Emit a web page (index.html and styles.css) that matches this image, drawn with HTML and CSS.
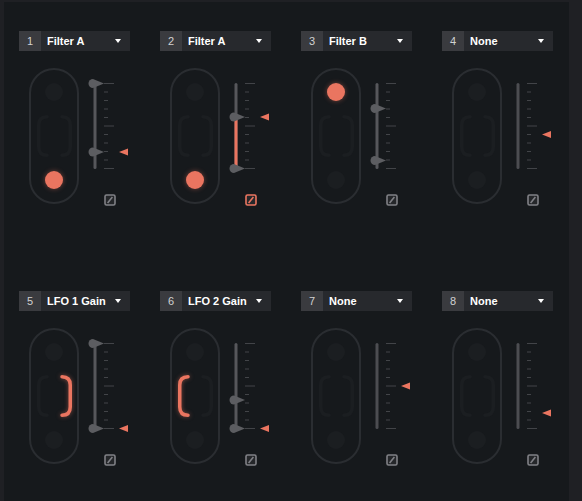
FILE: index.html
```html
<!DOCTYPE html>
<html>
<head>
<meta charset="utf-8">
<link rel="stylesheet" href="styles.css">
</head>
<body>
<svg class="defs" aria-hidden="true">
  <defs>
    <g id="ticks">
      <rect x="19" y="7" width="10" height="1" />
      <rect x="19" y="15.5" width="4" height="1" />
      <rect x="19" y="24" width="4" height="1" />
      <rect x="19" y="32.5" width="4" height="1" />
      <rect x="19" y="41" width="4" height="1" />
      <rect x="19" y="49.5" width="10" height="1" />
      <rect x="19" y="58" width="4" height="1" />
      <rect x="19" y="66.5" width="4" height="1" />
      <rect x="19" y="75" width="4" height="1" />
      <rect x="19" y="83.5" width="4" height="1" />
      <rect x="19" y="92" width="10" height="1" />
    </g>
    <path id="handle" d="M8,-4.5 A4.5,4.5 0 1 0 8,4.5 L19,0 Z" />
    <path id="marker" d="M34,0 L43,-3.5 L43,3.5 Z" />
    <g id="btnicon">
      <rect x="1" y="1" width="10" height="10" rx="1.5" />
      <line x1="3.6" y1="9" x2="8.4" y2="3" />
    </g>
  </defs>
</svg>

<div class="panel">
  <div class="grid">

    <!-- 1 -->
    <div class="module">
      <div class="header"><span class="num">1</span><span class="select"><span>Filter A</span><i class="caret"></i></span></div>
      <div class="body">
        <div class="pill">
          <span class="dot"></span>
          <svg class="bracket" viewBox="0 0 35 42"><path class="br" d="M10 1.75 Q1.75 1.75 1.75 10 L1.75 32 Q1.75 40.25 10 40.25"/><path class="br" d="M25 1.75 Q33.25 1.75 33.25 10 L33.25 32 Q33.25 40.25 25 40.25"/></svg>
          <span class="dot on"></span>
        </div>
        <div class="side">
          <svg class="slider" viewBox="0 0 45 100">
            <rect class="track" x="8.5" y="7" width="3" height="86" rx="1.5"/>
            <use class="tick" href="#ticks"/>
            <use class="knob" href="#handle" y="7.5"/>
            <use class="knob" href="#handle" y="76"/>
            <use class="mark" href="#marker" y="76"/>
          </svg>
          <svg class="btn" viewBox="0 0 12 12"><use href="#btnicon"/></svg>
        </div>
      </div>
    </div>

    <!-- 2 -->
    <div class="module">
      <div class="header"><span class="num">2</span><span class="select"><span>Filter A</span><i class="caret"></i></span></div>
      <div class="body">
        <div class="pill">
          <span class="dot"></span>
          <svg class="bracket" viewBox="0 0 35 42"><path class="br" d="M10 1.75 Q1.75 1.75 1.75 10 L1.75 32 Q1.75 40.25 10 40.25"/><path class="br" d="M25 1.75 Q33.25 1.75 33.25 10 L33.25 32 Q33.25 40.25 25 40.25"/></svg>
          <span class="dot on"></span>
        </div>
        <div class="side">
          <svg class="slider" viewBox="0 0 45 100">
            <rect class="track" x="8.5" y="7" width="3" height="86" rx="1.5"/>
            <rect class="track-on" x="8.5" y="41" width="3" height="52"/>
            <use class="tick" href="#ticks"/>
            <use class="knob" href="#handle" y="41"/>
            <use class="knob" href="#handle" y="92.5"/>
            <use class="mark" href="#marker" y="41"/>
          </svg>
          <svg class="btn on" viewBox="0 0 12 12"><use href="#btnicon"/></svg>
        </div>
      </div>
    </div>

    <!-- 3 -->
    <div class="module">
      <div class="header"><span class="num">3</span><span class="select"><span>Filter B</span><i class="caret"></i></span></div>
      <div class="body">
        <div class="pill">
          <span class="dot on"></span>
          <svg class="bracket" viewBox="0 0 35 42"><path class="br" d="M10 1.75 Q1.75 1.75 1.75 10 L1.75 32 Q1.75 40.25 10 40.25"/><path class="br" d="M25 1.75 Q33.25 1.75 33.25 10 L33.25 32 Q33.25 40.25 25 40.25"/></svg>
          <span class="dot"></span>
        </div>
        <div class="side">
          <svg class="slider" viewBox="0 0 45 100">
            <rect class="track" x="8.5" y="7" width="3" height="86" rx="1.5"/>
            <use class="tick" href="#ticks"/>
            <use class="knob" href="#handle" y="32.5"/>
            <use class="knob" href="#handle" y="84.5"/>
          </svg>
          <svg class="btn" viewBox="0 0 12 12"><use href="#btnicon"/></svg>
        </div>
      </div>
    </div>

    <!-- 4 -->
    <div class="module">
      <div class="header"><span class="num">4</span><span class="select"><span>None</span><i class="caret"></i></span></div>
      <div class="body">
        <div class="pill">
          <span class="dot"></span>
          <svg class="bracket" viewBox="0 0 35 42"><path class="br" d="M10 1.75 Q1.75 1.75 1.75 10 L1.75 32 Q1.75 40.25 10 40.25"/><path class="br" d="M25 1.75 Q33.25 1.75 33.25 10 L33.25 32 Q33.25 40.25 25 40.25"/></svg>
          <span class="dot"></span>
        </div>
        <div class="side">
          <svg class="slider" viewBox="0 0 45 100">
            <rect class="track idle" x="8.5" y="7" width="3" height="86" rx="1.5"/>
            <use class="tick" href="#ticks"/>
            <use class="mark" href="#marker" y="58.5"/>
          </svg>
          <svg class="btn" viewBox="0 0 12 12"><use href="#btnicon"/></svg>
        </div>
      </div>
    </div>

    <!-- 5 -->
    <div class="module">
      <div class="header"><span class="num">5</span><span class="select"><span>LFO 1 Gain</span><i class="caret"></i></span></div>
      <div class="body">
        <div class="pill">
          <span class="dot"></span>
          <svg class="bracket" viewBox="0 0 35 42"><path class="br" d="M10 1.75 Q1.75 1.75 1.75 10 L1.75 32 Q1.75 40.25 10 40.25"/><path class="br on" d="M25 1.75 Q33.25 1.75 33.25 10 L33.25 32 Q33.25 40.25 25 40.25"/></svg>
          <span class="dot"></span>
        </div>
        <div class="side">
          <svg class="slider" viewBox="0 0 45 100">
            <rect class="track" x="8.5" y="7" width="3" height="86" rx="1.5"/>
            <use class="tick" href="#ticks"/>
            <use class="knob" href="#handle" y="7.5"/>
            <use class="knob" href="#handle" y="92.5"/>
            <use class="mark" href="#marker" y="92.5"/>
          </svg>
          <svg class="btn" viewBox="0 0 12 12"><use href="#btnicon"/></svg>
        </div>
      </div>
    </div>

    <!-- 6 -->
    <div class="module">
      <div class="header"><span class="num">6</span><span class="select"><span>LFO 2 Gain</span><i class="caret"></i></span></div>
      <div class="body">
        <div class="pill">
          <span class="dot"></span>
          <svg class="bracket" viewBox="0 0 35 42"><path class="br on" d="M10 1.75 Q1.75 1.75 1.75 10 L1.75 32 Q1.75 40.25 10 40.25"/><path class="br" d="M25 1.75 Q33.25 1.75 33.25 10 L33.25 32 Q33.25 40.25 25 40.25"/></svg>
          <span class="dot"></span>
        </div>
        <div class="side">
          <svg class="slider" viewBox="0 0 45 100">
            <rect class="track" x="8.5" y="7" width="3" height="86" rx="1.5"/>
            <use class="tick" href="#ticks"/>
            <use class="knob" href="#handle" y="64"/>
            <use class="knob" href="#handle" y="92.5"/>
            <use class="mark" href="#marker" y="92.5"/>
          </svg>
          <svg class="btn" viewBox="0 0 12 12"><use href="#btnicon"/></svg>
        </div>
      </div>
    </div>

    <!-- 7 -->
    <div class="module">
      <div class="header"><span class="num">7</span><span class="select"><span>None</span><i class="caret"></i></span></div>
      <div class="body">
        <div class="pill">
          <span class="dot"></span>
          <svg class="bracket" viewBox="0 0 35 42"><path class="br" d="M10 1.75 Q1.75 1.75 1.75 10 L1.75 32 Q1.75 40.25 10 40.25"/><path class="br" d="M25 1.75 Q33.25 1.75 33.25 10 L33.25 32 Q33.25 40.25 25 40.25"/></svg>
          <span class="dot"></span>
        </div>
        <div class="side">
          <svg class="slider" viewBox="0 0 45 100">
            <rect class="track idle" x="8.5" y="7" width="3" height="86" rx="1.5"/>
            <use class="tick" href="#ticks"/>
            <use class="mark" href="#marker" y="50"/>
          </svg>
          <svg class="btn" viewBox="0 0 12 12"><use href="#btnicon"/></svg>
        </div>
      </div>
    </div>

    <!-- 8 -->
    <div class="module">
      <div class="header"><span class="num">8</span><span class="select"><span>None</span><i class="caret"></i></span></div>
      <div class="body">
        <div class="pill">
          <span class="dot"></span>
          <svg class="bracket" viewBox="0 0 35 42"><path class="br" d="M10 1.75 Q1.75 1.75 1.75 10 L1.75 32 Q1.75 40.25 10 40.25"/><path class="br" d="M25 1.75 Q33.25 1.75 33.25 10 L33.25 32 Q33.25 40.25 25 40.25"/></svg>
          <span class="dot"></span>
        </div>
        <div class="side">
          <svg class="slider" viewBox="0 0 45 100">
            <rect class="track idle" x="8.5" y="7" width="3" height="86" rx="1.5"/>
            <use class="tick" href="#ticks"/>
            <use class="mark" href="#marker" y="77"/>
          </svg>
          <svg class="btn" viewBox="0 0 12 12"><use href="#btnicon"/></svg>
        </div>
      </div>
    </div>

  </div>
</div>
</body>
</html>
```

FILE: styles.css
```css
html, body {
  margin: 0;
  padding: 0;
  height: 100%;
  overflow: hidden;
  background: #1f2024;
}

.defs {
  position: absolute;
  width: 0;
  height: 0;
  overflow: hidden;
}

.panel {
  margin: 2px 13px 0 4px;
  height: 499px;
  box-sizing: border-box;
  background: #16191c;
  padding: 29px 0 0 15px;
}

.grid {
  display: grid;
  grid-template-columns: repeat(4, 111px);
  column-gap: 30px;
  row-gap: 85px;
}

.module {
  width: 111px;
}

.header {
  display: flex;
  height: 20px;
}

.num {
  width: 22px;
  flex: none;
  background: #3a3b3f;
  color: #d2d2d2;
  font: 11px "Liberation Sans", Arial, sans-serif;
  display: flex;
  align-items: center;
  justify-content: center;
}

.select {
  flex: 1;
  background: #27292d;
  color: #ffffff;
  font: bold 11px "Liberation Sans", Arial, sans-serif;
  display: flex;
  align-items: center;
  justify-content: space-between;
  padding: 0 9px 0 6px;
}

.caret {
  width: 0;
  height: 0;
  border-left: 3.5px solid transparent;
  border-right: 3.5px solid transparent;
  border-top: 4px solid #ffffff;
}

.body {
  display: flex;
  align-items: flex-start;
  margin-top: 17px;
}

.pill {
  margin-left: 10px;
  width: 54px;
  height: 136px;
  box-sizing: border-box;
  border: 2px solid #2a2d31;
  border-radius: 27px;
  display: flex;
  flex-direction: column;
  align-items: center;
  padding-top: 13px;
}

.dot {
  width: 18px;
  height: 18px;
  border-radius: 50%;
  background: #1b1e21;
}

.dot.on {
  background: #ea7560;
  box-shadow: 0 0 5px rgba(234, 117, 96, 0.45);
}

.bracket {
  display: block;
  width: 35px;
  height: 42px;
  margin: 14px 0;
  overflow: visible;
}

.br {
  fill: none;
  stroke: #1b1e21;
  stroke-width: 3.5;
  stroke-linecap: round;
}

.br.on {
  stroke: #ea7560;
  filter: drop-shadow(0 0 2px rgba(234, 117, 96, 0.5));
}

.side {
  margin-left: 6px;
  margin-top: 8px;
  display: flex;
  flex-direction: column;
}

.slider {
  display: block;
  width: 45px;
  height: 100px;
  overflow: visible;
}

.track {
  fill: #56575b;
}

.track.idle {
  fill: #4c4d51;
}

.track-on {
  fill: #ea7560;
}

.tick {
  fill: #424448;
}

.knob {
  fill: #5c5d61;
}

.mark {
  fill: #ea7560;
}

.btn {
  display: block;
  width: 12px;
  height: 12px;
  margin: 18px 0 0 19px;
  fill: #25272a;
  stroke: #808186;
  stroke-width: 1.6;
}

.btn line {
  stroke-width: 2;
}

.btn.on {
  stroke: #ea7560;
}
```
